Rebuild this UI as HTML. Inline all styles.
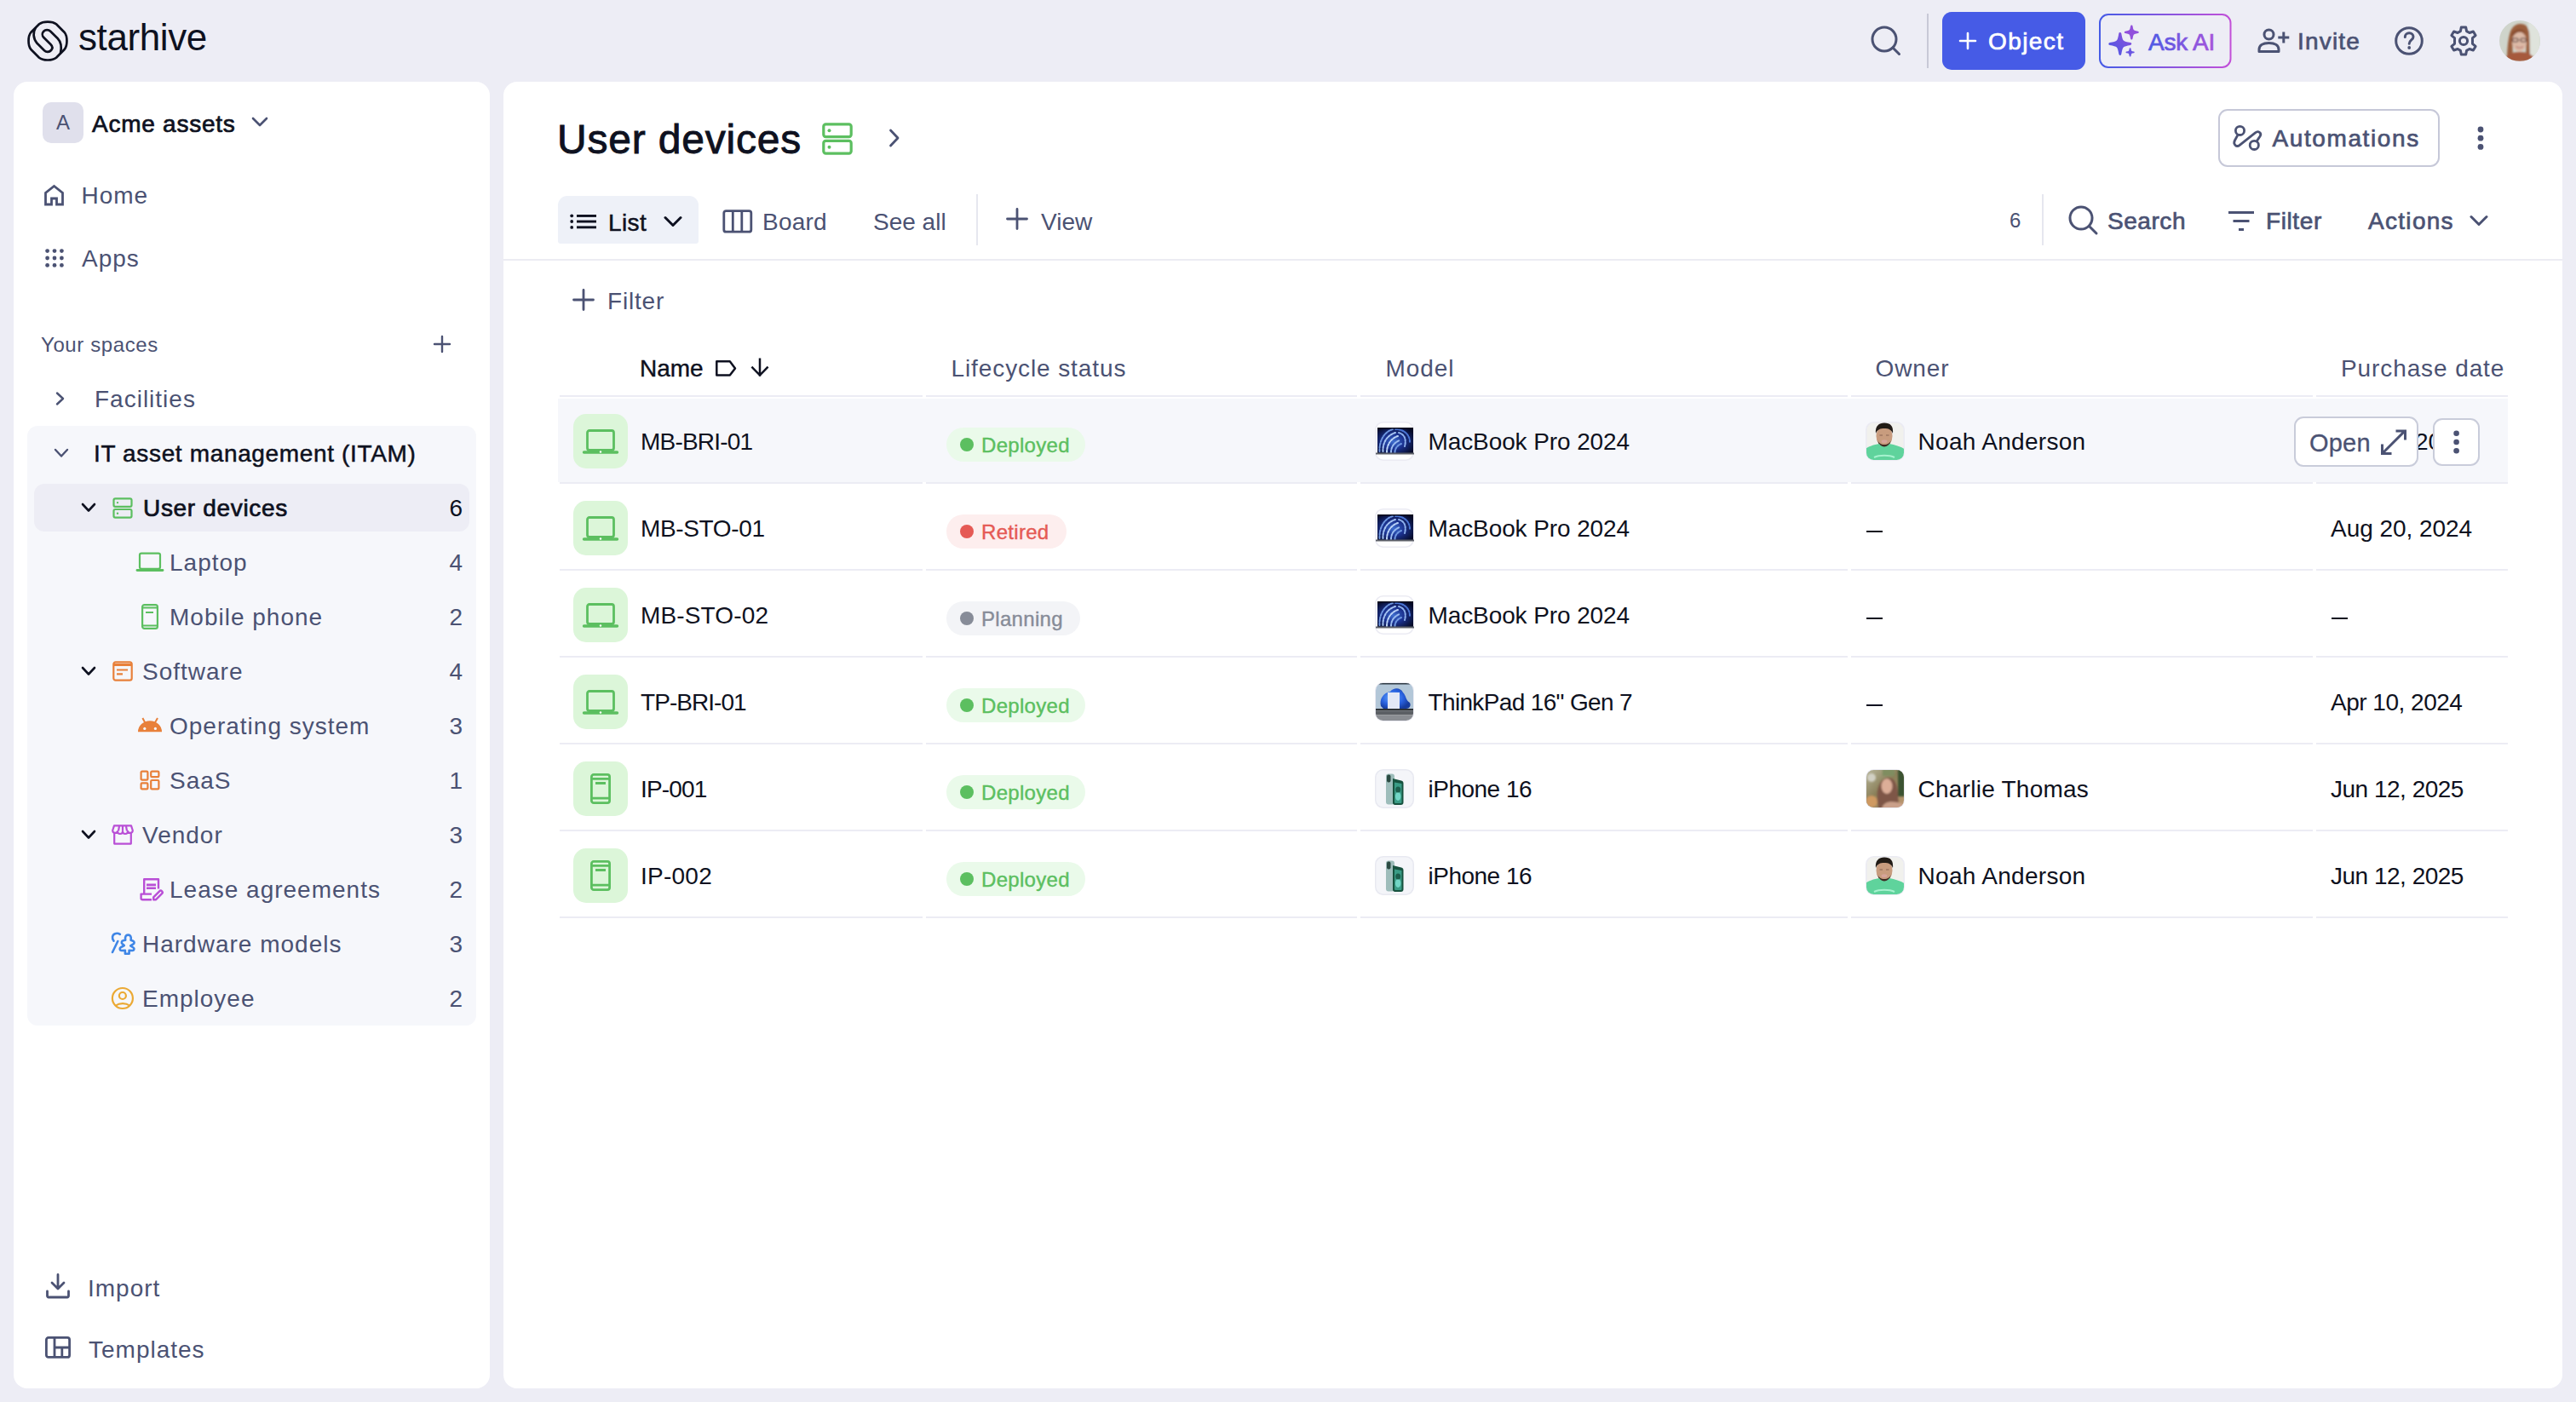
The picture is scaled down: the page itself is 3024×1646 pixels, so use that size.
<!DOCTYPE html>
<html><head><meta charset="utf-8">
<style>
*{box-sizing:border-box;margin:0;padding:0}
html,body{width:3024px;height:1646px;overflow:hidden}
body{background:#ededf5;-webkit-font-smoothing:antialiased;font-family:"Liberation Sans",sans-serif;position:relative;color:#0e1120}
.a{position:absolute}
.t{position:absolute;white-space:nowrap;line-height:1}
.s28{font-size:28px}
.s24{font-size:24px}
.dk{color:#0e1120}
.sl{color:#4b5273}
.b{font-weight:bold}
.card{position:absolute;background:#fff;border-radius:16px}
svg{position:absolute;overflow:visible}
@media (max-width:2000px){html{zoom:0.5}}
.thumb{position:absolute;width:46px;height:46px;border-radius:9px;overflow:hidden;box-shadow:0 0 0 1.5px #ebebf3}
.av{position:absolute;width:46px;height:46px;border-radius:9px;overflow:hidden;box-shadow:0 0 0 1.5px #ebebf3}
</style></head><body>

<!-- TOP BAR -->
<svg style="left:28px;top:20px" width="56" height="56" viewBox="0 0 56 56" fill="none" stroke="#0e1120" stroke-width="2.7" stroke-linecap="round" stroke-linejoin="round">
<path d="M18 8.3 C22.5 4.6 33.5 4.6 38 8.3 L47.7 18 C51.4 22.5 51.4 33.5 47.7 38 L38 47.7 C33.5 51.4 22.5 51.4 18 47.7 L8.3 38 C4.6 33.5 4.6 22.5 8.3 18 Z"/>
<path d="M13.5 13.3 C10.8 17.5 10.5 25 15.5 30.8 L24 39.3 C26.3 41.5 30 41.3 32 39 C33.8 37 33.6 34.3 31.6 32.3 L23.3 24 C21.3 22 21.3 18.7 23.3 16.7 C25.3 14.7 29 14.6 31.2 16.7 L39.6 25 C44 29.5 44.6 35.5 43 42.5"/>
</svg>
<div class="t dk" style="left:92px;top:22px;font-size:44px;letter-spacing:-0.4px">starhive</div>

<svg style="left:2196px;top:30px" width="36" height="36" viewBox="0 0 36 36" fill="none" stroke="#4b5273" stroke-width="3"><circle cx="16" cy="16" r="14"/><path d="M26 26 L33.5 33.5" stroke-linecap="round"/></svg>
<div class="a" style="left:2262px;top:16px;width:2px;height:64px;background:#c8c9d6"></div>
<div class="a" style="left:2280px;top:14px;width:168px;height:68px;border-radius:11px;background:#465be6"></div>
<svg style="left:2300px;top:38px" width="20" height="20" viewBox="0 0 20 20"><path d="M10 1 V19 M1 10 H19" stroke="#fff" stroke-width="2.6" stroke-linecap="round"/></svg>
<div class="t s28" style="left:2334px;top:35px;color:#fff;-webkit-text-stroke:0.7px #fff;letter-spacing:1.4px">Object</div>
<svg style="left:2464px;top:16px" width="156" height="64" viewBox="0 0 156 64"><defs><linearGradient id="gAI" x1="0" y1="0" x2="1" y2="0"><stop offset="0" stop-color="#465be6"/><stop offset="1" stop-color="#c24fd8"/></linearGradient><linearGradient id="gAI2" x1="0" y1="1" x2="1" y2="0" gradientUnits="objectBoundingBox"><stop offset="0" stop-color="#4a58e4"/><stop offset="1" stop-color="#8e50dc"/></linearGradient></defs><rect x="1" y="1" width="153.5" height="62" rx="10" fill="none" stroke="url(#gAI)" stroke-width="2"/>
<path d="M24.8 23.4 C26.24 33.0 27.2 33.96 36.8 35.4 C27.2 36.84 26.24 37.8 24.8 47.4 C23.36 37.8 22.4 36.84 12.8 35.4 C22.4 33.96 23.36 33.0 24.8 23.4 Z" fill="url(#gAI2)" stroke="url(#gAI2)" stroke-width="3.0" stroke-linejoin="round"/><path d="M38.3 14.6 C39.18 20.44 39.76 21.02 45.6 21.9 C39.76 22.78 39.18 23.36 38.3 29.2 C37.42 23.36 36.84 22.78 31.0 21.9 C36.84 21.02 37.42 20.44 38.3 14.6 Z" fill="#9150dc" stroke="#9150dc" stroke-width="2.4" stroke-linejoin="round"/><path d="M36.6 41.1 C37.1 44.46 37.44 44.8 40.8 45.3 C37.44 45.8 37.1 46.14 36.6 49.5 C36.1 46.14 35.76 45.8 32.4 45.3 C35.76 44.8 36.1 44.46 36.6 41.1 Z" fill="#6a56e2" stroke="#6a56e2" stroke-width="1.8" stroke-linejoin="round"/></svg>
<svg style="left:2516px;top:30px" width="100" height="40" viewBox="0 0 100 40"><defs><linearGradient id="gtx" x1="0" y1="0" x2="1" y2="0"><stop offset="0" stop-color="#4d5ae4"/><stop offset="1" stop-color="#a653db"/></linearGradient></defs><text x="6" y="28.6" font-family="Liberation Sans" font-size="28" fill="url(#gtx)" stroke="url(#gtx)" stroke-width="0.7" letter-spacing="-0.2">Ask AI</text></svg>

<svg style="left:2649px;top:33px" width="40" height="30" viewBox="0 0 40 30" fill="none" stroke="#4b5273" stroke-width="3"><circle cx="14.5" cy="7.5" r="5.5"/><path d="M3 27.5 V25 C3 20.5 7 17.5 14.5 17.5 C22 17.5 26 20.5 26 25 V27.5 Z" stroke-linejoin="round"/><path d="M31.8 4.5 V17.5 M25.3 11 H38.3"/></svg>
<div class="t s28 sl" style="left:2697px;top:35px;-webkit-text-stroke:0.7px #4b5273;letter-spacing:1.2px">Invite</div>
<svg style="left:2810px;top:30px" width="36" height="36" viewBox="0 0 36 36" fill="none" stroke="#4b5273" stroke-width="3"><circle cx="18" cy="18" r="15.3"/><path d="M13.3 13.5 C13.3 10.5 15.5 8.8 18.2 8.8 C21 8.8 23 10.6 23 13.2 C23 16.8 18.2 17 18.2 21.3" stroke-linecap="round"/><circle cx="18.2" cy="26" r="1.9" fill="#4b5273" stroke="none"/></svg>
<svg style="left:2874px;top:30px" width="36" height="36" viewBox="0 0 36 36" fill="none" stroke="#4b5273" stroke-width="3" stroke-linejoin="round"><path d="M15.3 2 H20.7 L21.6 6.6 L24.9 8.5 L29.4 7 L32.1 11.6 L28.5 14.7 V21.3 L32.1 24.4 L29.4 29 L24.9 27.5 L21.6 29.4 L20.7 34 H15.3 L14.4 29.4 L11.1 27.5 L6.6 29 L3.9 24.4 L7.5 21.3 V14.7 L3.9 11.6 L6.6 7 L11.1 8.5 L14.4 6.6 Z"/><circle cx="18" cy="18" r="4.6"/></svg>
<svg style="left:2934px;top:24px" width="48" height="48" viewBox="0 0 48 48"><defs><clipPath id="cav"><circle cx="24" cy="24" r="24"/></clipPath><filter id="bav" x="-10%" y="-10%" width="120%" height="120%"><feGaussianBlur stdDeviation="1"/></filter></defs>
<g clip-path="url(#cav)"><rect width="48" height="48" fill="#cfd4cb"/><g filter="url(#bav)"><rect x="34" y="0" width="14" height="48" fill="#dfe3dc"/>
<path d="M9 48 C9 36 10 22 13 13 C16 6 20 4 25 4 C31 4 34 8 35 14 C36 24 35 38 37 48 L31 48 C31 40 32 30 31 20 C28 14 20 13 16 20 C15 30 16 40 16 48 Z" fill="#9b5f3e"/>
<ellipse cx="23.5" cy="25" rx="8.5" ry="11.5" fill="#ddb9a6"/><path d="M14 16 C18 9 28 8 33 16 C29 12 21 12 15 19 Z" fill="#8a4f30"/>
<rect x="15.5" y="21" width="6.5" height="4" rx="1.5" fill="none" stroke="#4a3434" stroke-width="1.2"/><rect x="25" y="21" width="6.5" height="4" rx="1.5" fill="none" stroke="#4a3434" stroke-width="1.2"/>
<path d="M19.5 30.5 C22 32.5 25.5 32.5 28 30.5" stroke="#b87a74" stroke-width="1.3" fill="none"/>
<path d="M4 48 C8 40 16 37 24 37 C32 37 40 40 44 48 Z" fill="#a65a3c"/></g></g></svg>
<!-- SIDEBAR -->
<div class="card" style="left:16px;top:96px;width:559px;height:1534px"></div>
<div class="a" style="left:50px;top:120px;width:48px;height:48px;border-radius:10px;background:#e0e0ec"></div>
<div class="t s24 sl" style="left:50px;width:48px;text-align:center;top:132px">A</div>
<div class="t s28 dk" style="left:108px;top:132px;-webkit-text-stroke:0.7px #0e1120;letter-spacing:0.75px">Acme assets</div>
<svg style="left:295px;top:137px" width="20" height="12" viewBox="0 0 20 12"><path d="M2 2 L10 10 L18 2" fill="none" stroke="#4b5273" stroke-width="2.6" stroke-linecap="round" stroke-linejoin="round"/></svg>

<!-- home -->
<svg style="left:52px;top:217px" width="24" height="24" viewBox="0 0 24 24"><path d="M1.5 23 V9.5 L11.5 1.5 L21.5 9.5 V23 H14.5 V16 H8.5 V23 Z" fill="none" stroke="#4b5273" stroke-width="2.8" stroke-linejoin="miter"/></svg>
<div class="t s28 sl" style="left:95.5px;top:216px;letter-spacing:1px">Home</div>
<!-- apps -->
<svg style="left:53px;top:292px" width="22" height="22" viewBox="0 0 22 22" fill="#4b5273"><circle cx="2.6" cy="2.6" r="2.4"/><circle cx="11" cy="2.6" r="2.4"/><circle cx="19.4" cy="2.6" r="2.4"/><circle cx="2.6" cy="11" r="2.4"/><circle cx="11" cy="11" r="2.4"/><circle cx="19.4" cy="11" r="2.4"/><circle cx="2.6" cy="19.4" r="2.4"/><circle cx="11" cy="19.4" r="2.4"/><circle cx="19.4" cy="19.4" r="2.4"/></svg>
<div class="t s28 sl" style="left:96px;top:290px;letter-spacing:1px">Apps</div>

<div class="t s24 sl" style="left:48px;top:393px;letter-spacing:0.6px">Your spaces</div>
<svg style="left:509px;top:394px" width="20" height="20" viewBox="0 0 20 20"><path d="M10 1 V19 M1 10 H19" stroke="#4b5273" stroke-width="2.4" stroke-linecap="round"/></svg>

<!-- Facilities -->
<svg style="left:65px;top:460px" width="12" height="16" viewBox="0 0 12 16"><path d="M2 1.5 L9 8 L2 14.5" fill="none" stroke="#4b5273" stroke-width="2.4" stroke-linecap="round" stroke-linejoin="round"/></svg>
<div class="t s28 sl" style="left:111px;top:455px;letter-spacing:1px">Facilities</div>

<!-- ITAM group -->
<div class="a" style="left:32px;top:500px;width:527px;height:704px;border-radius:12px;background:#f6f7fb"></div>
<svg style="left:63px;top:526px" width="18" height="12" viewBox="0 0 18 12"><path d="M2 2 L9 9.5 L16 2" fill="none" stroke="#4b5273" stroke-width="2.4" stroke-linecap="round" stroke-linejoin="round"/></svg>
<div class="t s28 dk" style="left:110px;top:519px;-webkit-text-stroke:0.5px #0e1120;letter-spacing:0.65px">IT asset management (ITAM)</div>

<div class="a" style="left:40px;top:568px;width:511px;height:56px;border-radius:12px;background:#ededf5"></div>
<svg style="left:95px;top:590px" width="18" height="12" viewBox="0 0 18 12"><path d="M2 2 L9 9.5 L16 2" fill="none" stroke="#0e1120" stroke-width="2.6" stroke-linecap="round" stroke-linejoin="round"/></svg>
<svg style="left:132px;top:584px" width="24" height="26" viewBox="0 0 24 26" fill="none" stroke="#5cbf60" stroke-width="2.2"><rect x="1.5" y="1.3" width="21" height="9.6" rx="1.8"/><rect x="1.5" y="14" width="21" height="9.6" rx="1.8"/><circle cx="6" cy="6.1" r="1.2" fill="#5cbf60" stroke="none"/><circle cx="6" cy="18.8" r="1.2" fill="#5cbf60" stroke="none"/></svg>
<div class="t s28 dk" style="left:168px;top:583px;-webkit-text-stroke:0.7px #0e1120;letter-spacing:0.67px">User devices</div>
<div class="t s28 dk" style="left:500px;width:43px;text-align:right;top:583px">6</div>

<!-- Laptop -->
<svg style="left:160px;top:648px" width="32" height="24" viewBox="0 0 32 24" fill="none" stroke="#5cbf60" stroke-width="2.2"><rect x="4" y="1.6" width="24" height="18.2" rx="2"/><path d="M1 21.5 H31" stroke-width="2.8" stroke-linecap="round"/></svg>
<div class="t s28 sl" style="left:199px;top:647px;letter-spacing:1px">Laptop</div>
<div class="t s28 sl" style="left:500px;width:43px;text-align:right;top:647px">4</div>
<!-- Mobile -->
<svg style="left:166px;top:709px" width="20" height="30" viewBox="0 0 20 30" fill="none" stroke="#5cbf60" stroke-width="2.2"><rect x="1.1" y="1.1" width="17.8" height="27.8" rx="2.4"/><path d="M1.5 4.5 H18.5 M5 10 H14 M1.5 25.5 H18.5"/></svg>
<div class="t s28 sl" style="left:199px;top:711px;letter-spacing:1px">Mobile phone</div>
<div class="t s28 sl" style="left:500px;width:43px;text-align:right;top:711px">2</div>

<!-- Software -->
<svg style="left:95px;top:782px" width="18" height="12" viewBox="0 0 18 12"><path d="M2 2 L9 9.5 L16 2" fill="none" stroke="#0e1120" stroke-width="2.6" stroke-linecap="round" stroke-linejoin="round"/></svg>
<svg style="left:132px;top:776px" width="24" height="24" viewBox="0 0 24 24" fill="none" stroke="#e8803a" stroke-width="2.2"><rect x="1.3" y="1.3" width="21.4" height="21.4" rx="2.4"/><path d="M1.3 4.5 H22.7" stroke-width="3"/><path d="M5 10.5 H18 M5 15.3 H12"/></svg>
<div class="t s28 sl" style="left:167px;top:775px;letter-spacing:1px">Software</div>
<div class="t s28 sl" style="left:500px;width:43px;text-align:right;top:775px">4</div>
<!-- OS -->
<svg style="left:161px;top:841px" width="30" height="19" viewBox="0 0 30 19"><path d="M1 18.3 A14 13 0 0 1 29 18.3 Z" fill="#e8803a"/><path d="M6.4 2 L9.6 8 M24 2 L20.6 8" stroke="#e8803a" stroke-width="2"/><circle cx="8.8" cy="14.4" r="1.6" fill="#f6f7fb"/><circle cx="21.4" cy="14.4" r="1.6" fill="#f6f7fb"/></svg>
<div class="t s28 sl" style="left:199px;top:839px;letter-spacing:1px">Operating system</div>
<div class="t s28 sl" style="left:500px;width:43px;text-align:right;top:839px">3</div>
<!-- SaaS -->
<svg style="left:164px;top:904px" width="24" height="24" viewBox="0 0 24 24" fill="none" stroke="#e8803a" stroke-width="2.2"><rect x="1.6" y="1.6" width="7.8" height="10" rx="1.2"/><rect x="13.2" y="1.6" width="9.2" height="6.6" rx="1.2"/><rect x="1.6" y="15.4" width="7.8" height="7" rx="1.2"/><rect x="13.2" y="12" width="9.2" height="10.4" rx="1.2"/></svg>
<div class="t s28 sl" style="left:199px;top:903px;letter-spacing:1px">SaaS</div>
<div class="t s28 sl" style="left:500px;width:43px;text-align:right;top:903px">1</div>

<!-- Vendor -->
<svg style="left:95px;top:974px" width="18" height="12" viewBox="0 0 18 12"><path d="M2 2 L9 9.5 L16 2" fill="none" stroke="#0e1120" stroke-width="2.6" stroke-linecap="round" stroke-linejoin="round"/></svg>
<svg style="left:131px;top:968px" width="26" height="24" viewBox="0 0 26 24" fill="none" stroke="#b94fd6" stroke-width="2.2" stroke-linejoin="round"><path d="M3 1.3 H23 L24.8 7 A3 3 0 0 1 19 8 A3 3 0 0 1 13 8 A3 3 0 0 1 7 8 A3 3 0 0 1 1.2 7 Z"/><path d="M3.2 10 V22.6 H22.8 V10"/><path d="M9 2 L8 7.5 M13 2 V7.5 M17 2 L18 7.5"/></svg>
<div class="t s28 sl" style="left:167px;top:967px;letter-spacing:1px">Vendor</div>
<div class="t s28 sl" style="left:500px;width:43px;text-align:right;top:967px">3</div>
<!-- Lease -->
<svg style="left:164px;top:1030px" width="28" height="28" viewBox="0 0 28 28" fill="none" stroke="#b94fd6" stroke-width="2.4" stroke-linejoin="round"><path d="M5.2 19.5 V2.3 H22 V13.4"/><path d="M8 8.9 H19 M8 12.7 H19" stroke-width="2.6"/><path d="M14 19.6 H1.6 V24.5 C1.6 25.6 2.4 26.3 3.5 26.3 H14"/><path d="M16.2 26.2 V23.3 L23.2 16.3 C24 15.5 25.3 15.5 26.1 16.3 C26.9 17.1 26.9 18.4 26.1 19.2 L19.1 26.2 Z"/></svg>
<div class="t s28 sl" style="left:199px;top:1031px;letter-spacing:1px">Lease agreements</div>
<div class="t s28 sl" style="left:500px;width:43px;text-align:right;top:1031px">2</div>

<!-- HW models -->
<svg style="left:130px;top:1094px" width="30" height="28" viewBox="0 0 30 28" fill="none" stroke="#3f86e6" stroke-width="2.6" stroke-linecap="round" stroke-linejoin="round"><path d="M3.5 10.7 C1.2 8 1.5 3.5 5 2.2 C7 1.5 9.3 1.9 10.9 2.9"/><path d="M8.3 11 L2 24"/><path d="M20.4 3.6 C23 3.6 24.4 5.5 23.6 9.8 L26.2 10.8 C28 11.5 28 13.5 26.5 14.4 L23.2 16.4 L26.5 18.5 C28.2 19.6 27.5 22 25.4 22 L21.6 21.8 V25.8 H16.9 V21.8 L12.8 22 C10.5 22 10 19.4 11.6 18.4 L15.8 16 L13.5 14 C12.2 12.8 12.8 10.6 14.6 10.2 L17.2 9.8 C16.5 5.5 17.8 3.6 20.4 3.6 Z"/></svg>
<div class="t s28 sl" style="left:167px;top:1095px;letter-spacing:1px">Hardware models</div>
<div class="t s28 sl" style="left:500px;width:43px;text-align:right;top:1095px">3</div>
<!-- Employee -->
<svg style="left:130px;top:1158px" width="28" height="28" viewBox="0 0 28 28" fill="none" stroke="#eba934" stroke-width="2.2"><circle cx="13.9" cy="14" r="12"/><circle cx="13.9" cy="11" r="4"/><path d="M6 22.5 A10 6 0 0 1 22 22.5"/></svg>
<div class="t s28 sl" style="left:167px;top:1159px;letter-spacing:1px">Employee</div>
<div class="t s28 sl" style="left:500px;width:43px;text-align:right;top:1159px">2</div>

<!-- Import / Templates -->
<svg style="left:54px;top:1495px" width="28" height="30" viewBox="0 0 28 30" fill="none" stroke="#4b5273" stroke-width="2.8" stroke-linecap="round" stroke-linejoin="round"><path d="M14 1.5 V18 M7 11 L14 18 L21 11"/><path d="M1.5 21 V26.5 A1.5 1.5 0 0 0 3 28 H25 A1.5 1.5 0 0 0 26.5 26.5 V21"/></svg>
<div class="t s28 sl" style="left:103px;top:1499px;letter-spacing:1px">Import</div>
<svg style="left:53px;top:1569px" width="30" height="26" viewBox="0 0 30 26" fill="none" stroke="#4b5273" stroke-width="2.8" stroke-linejoin="round"><rect x="1.4" y="1.4" width="27.2" height="23" rx="2.5"/><path d="M11 1.4 V24.4 M11 13 H28.6 M19.8 13 V24.4"/></svg>
<div class="t s28 sl" style="left:104px;top:1571px;letter-spacing:1px">Templates</div>

<!-- MAIN -->
<div class="card" style="left:591px;top:96px;width:2417px;height:1534px"></div>
<div class="t dk" style="left:654px;top:140px;font-size:48px;-webkit-text-stroke:0.9px #0e1120;letter-spacing:0.8px">User devices</div>
<svg style="left:965px;top:144px" width="36" height="38" viewBox="0 0 36 38" fill="none" stroke="#5cbf60" stroke-width="3.2"><rect x="1.8" y="1.8" width="32.4" height="14.8" rx="2.6"/><rect x="1.8" y="21.4" width="32.4" height="14.8" rx="2.6"/><circle cx="8.5" cy="9.2" r="2" fill="#5cbf60" stroke="none"/><circle cx="8.5" cy="28.8" r="2" fill="#5cbf60" stroke="none"/></svg>
<svg style="left:1043px;top:151px" width="14" height="22" viewBox="0 0 14 22"><path d="M2.5 2 L11 11 L2.5 20" fill="none" stroke="#4b5273" stroke-width="2.8" stroke-linecap="round" stroke-linejoin="round"/></svg>

<div class="a" style="left:2604px;top:128px;width:260px;height:68px;border:2px solid #c6c8d8;border-radius:11px"></div>
<svg style="left:2620px;top:146px" width="36" height="32" viewBox="0 0 36 32" fill="none" stroke="#4b5273" stroke-width="2.8" stroke-linecap="round" stroke-linejoin="round"><circle cx="9.5" cy="7.4" r="5.1"/><circle cx="26.3" cy="24.4" r="5.1"/><path d="M7 12.4 L3.4 19 C1.2 23.3 5.3 27.5 9.2 24.3 L27.5 9.8 C31 7 35.3 10 33.2 13.8 L29.3 19.6"/></svg>
<div class="t s28 sl" style="left:2667.5px;top:149px;-webkit-text-stroke:0.7px #4b5273;letter-spacing:1.6px">Automations</div>
<svg style="left:2907px;top:148px" width="10" height="30" viewBox="0 0 10 30" fill="#4b5273"><circle cx="5" cy="4" r="3.4"/><circle cx="5" cy="14.2" r="3.4"/><circle cx="5" cy="24.4" r="3.4"/></svg>

<!-- toolbar -->
<div class="a" style="left:655px;top:230px;width:165px;height:56px;border-radius:11px 11px 3px 3px;background:#eef1f8"></div>
<svg style="left:669px;top:251px" width="32" height="18" viewBox="0 0 32 18" fill="#0e1120"><circle cx="2.2" cy="2.3" r="1.9"/><circle cx="2.2" cy="9" r="1.9"/><circle cx="2.2" cy="15.9" r="1.9"/><rect x="8" y="1" width="23" height="2.9"/><rect x="8" y="7.6" width="23" height="2.9"/><rect x="8" y="14.4" width="23" height="2.9"/></svg>
<div class="t s28 dk" style="left:714px;top:248px;-webkit-text-stroke:0.5px #0e1120;letter-spacing:0.4px">List</div>
<svg style="left:779px;top:253px" width="22" height="15" viewBox="0 0 22 15"><path d="M2 2.5 L11 11.5 L20 2.5" fill="none" stroke="#0e1120" stroke-width="3" stroke-linecap="round" stroke-linejoin="round"/></svg>
<svg style="left:848px;top:246px" width="36" height="30" viewBox="0 0 36 30" fill="none" stroke="#4b5273" stroke-width="2.8"><rect x="1.8" y="1.6" width="32" height="24.6" rx="2.5"/><path d="M12.3 1.6 V26.2 M22.8 1.6 V26.2"/></svg>
<div class="t s28 sl" style="left:895px;top:247px;letter-spacing:0.2px">Board</div>
<div class="t s28 sl" style="left:1025px;top:247px">See all</div>
<div class="a" style="left:1146px;top:228px;width:2px;height:60px;background:#e6e7ef"></div>
<svg style="left:1181px;top:244px" width="26" height="26" viewBox="0 0 26 26"><path d="M13 1.5 V24.5 M1.5 13 H24.5" stroke="#4b5273" stroke-width="2.8" stroke-linecap="round"/></svg>
<div class="t s28 sl" style="left:1222px;top:247px">View</div>

<div class="t s24 sl" style="left:2359px;top:247px">6</div>
<div class="a" style="left:2397px;top:228px;width:2px;height:60px;background:#e6e7ef"></div>
<svg style="left:2428px;top:241px" width="36" height="36" viewBox="0 0 36 36" fill="none" stroke="#4b5273" stroke-width="3"><circle cx="15" cy="15" r="13"/><path d="M24.5 24.5 L33 33" stroke-linecap="round"/></svg>
<div class="t s28 sl" style="left:2474px;top:246px;-webkit-text-stroke:0.7px #4b5273;letter-spacing:0.55px">Search</div>
<svg style="left:2615px;top:247px" width="32" height="26" viewBox="0 0 32 26" stroke="#4b5273" stroke-width="3"><path d="M1 2.5 H31 M6.5 12.5 H25.5 M13 22.5 H19"/></svg>
<div class="t s28 sl" style="left:2660px;top:246px;-webkit-text-stroke:0.7px #4b5273;letter-spacing:0.6px">Filter</div>
<div class="t s28 sl" style="left:2780px;top:246px;-webkit-text-stroke:0.7px #4b5273;letter-spacing:1.3px">Actions</div>
<svg style="left:2899px;top:252px" width="22" height="15" viewBox="0 0 22 15"><path d="M2 2.5 L11 11.5 L20 2.5" fill="none" stroke="#4b5273" stroke-width="3" stroke-linecap="round" stroke-linejoin="round"/></svg>

<div class="a" style="left:591px;top:304px;width:2417px;height:2px;background:#ececf3"></div>

<svg style="left:672px;top:339px" width="26" height="26" viewBox="0 0 26 26"><path d="M13 1.5 V24.5 M1.5 13 H24.5" stroke="#4b5273" stroke-width="2.8" stroke-linecap="round"/></svg>
<div class="t s28 sl" style="left:713px;top:340px;letter-spacing:0.8px">Filter</div>

<!-- headers -->
<div class="t s28 dk" style="left:751px;top:419px;-webkit-text-stroke:0.4px #0e1120">Name</div>
<svg style="left:840px;top:423px" width="25" height="19" viewBox="0 0 25 19" fill="none" stroke="#0e1120" stroke-width="2.5" stroke-linejoin="round"><path d="M1.3 1.3 H16.8 L23 9.4 L16.8 17.5 H1.3 Z"/></svg>
<svg style="left:881px;top:420px" width="22" height="24" viewBox="0 0 22 24" fill="none" stroke="#0e1120" stroke-width="2.5" stroke-linecap="square" stroke-linejoin="miter"><path d="M11 1.8 V20.5 M2.3 11.5 L11 20.5 L19.7 11.5"/></svg>
<div class="t s28 sl" style="left:1116.5px;top:419px;letter-spacing:0.9px">Lifecycle status</div>
<div class="t s28 sl" style="left:1626.5px;top:419px;letter-spacing:0.9px">Model</div>
<div class="t s28 sl" style="left:2201.5px;top:419px;letter-spacing:0.9px">Owner</div>
<div class="t s28 sl" style="left:2748px;top:419px;letter-spacing:0.9px">Purchase date</div>

<div class="a" style="left:657px;top:464px;width:426px;height:2px;background:#ececf4"></div><div class="a" style="left:1087px;top:464px;width:506px;height:2px;background:#ececf4"></div><div class="a" style="left:1597px;top:464px;width:572px;height:2px;background:#ececf4"></div><div class="a" style="left:2173px;top:464px;width:542px;height:2px;background:#ececf4"></div><div class="a" style="left:2719px;top:464px;width:225px;height:2px;background:#ececf4"></div>
<div class="a" style="left:655px;top:468px;width:2289px;height:98px;background:#f6f7fb"></div>
<div class="a" style="left:673px;top:486px;width:64px;height:64px;border-radius:15px;background:#dcf6d9"></div>
<svg style="left:684px;top:504px" width="42" height="30" viewBox="0 0 42 30" fill="none" stroke="#5cbf60" stroke-width="2.8"><rect x="5.5" y="1.5" width="31" height="23" rx="2.5"/><path d="M1.5 27 H40.5" stroke-width="3.4" stroke-linecap="round"/><circle cx="21" cy="26.5" r="1.2" fill="#fff" stroke="none"/></svg>
<div class="t s28 dk" style="left:752px;top:505px;letter-spacing:-0.8px">MB-BRI-01</div>
<div class="a" style="left:1111px;top:502px;width:163px;height:40px;border-radius:20px;background:#eafaea"></div>
<div class="a" style="left:1127px;top:514px;width:16px;height:16px;border-radius:8px;background:#5cbf60"></div>
<div class="t s24" style="left:1152px;top:511px;color:#5cbf60;-webkit-text-stroke:0.4px #5cbf60;letter-spacing:0.3px">Deployed</div>
<svg style="left:1614px;top:495px" width="46" height="46" viewBox="0 0 46 46"><defs><radialGradient id="mg495" cx="0.45" cy="0.55" r="0.65"><stop offset="0" stop-color="#3f6fd0"/><stop offset="0.45" stop-color="#1b3290"/><stop offset="1" stop-color="#050a26"/></radialGradient><filter id="mb495" x="-5%" y="-5%" width="110%" height="110%"><feGaussianBlur stdDeviation="0.45"/></filter></defs><rect x="0.75" y="0.75" width="44.5" height="44.5" rx="9" fill="#fff" stroke="#ebebf3" stroke-width="1.5"/>
<rect x="3" y="7" width="42" height="30" fill="url(#mg495)"/>
<g fill="none" stroke-linecap="round" stroke-dasharray="2.2 1.6" stroke-width="2" filter="url(#mb495)">
<path d="M5.5 35 C5 22 11 12 21 9" stroke="#6f98e2"/>
<path d="M9.5 35 C9 25 14 16 24 13" stroke="#a8c6f4"/>
<path d="M14 36 C14 28 18 20 27 17" stroke="#bcd4f8"/>
<path d="M19 36 C19 30 22 25 29 22" stroke="#9bbcf0"/>
<path d="M23.5 36 C23.5 32 26 28 31 26" stroke="#6f98e2"/>
<path d="M24 9 C34 9 41 15 41 24" stroke="#4a74d4"/>
<path d="M28 13 C35 15 37 21 35 29" stroke="#8fb2ee"/>
</g>
<rect x="3" y="7" width="42" height="1.5" fill="#0a0d1c"/>
<rect x="1" y="36.5" width="45" height="2" fill="#5d6068"/></svg>
<div class="t s28 dk" style="left:1676.5px;top:505px;letter-spacing:-0.1px">MacBook Pro 2024</div>
<svg style="left:2190px;top:495px" width="46" height="46" viewBox="0 0 46 46"><defs><clipPath id="cn495"><rect x="1" y="1" width="44" height="44" rx="8.5"/></clipPath><filter id="bl495" x="-10%" y="-10%" width="120%" height="120%"><feGaussianBlur stdDeviation="0.6"/></filter></defs>
<rect x="0.75" y="0.75" width="44.5" height="44.5" rx="9" fill="#f1f1ed" stroke="#ebebf3" stroke-width="1.5"/>
<g clip-path="url(#cn495)" filter="url(#bl495)"><ellipse cx="22" cy="17" rx="9.5" ry="12.5" fill="#c89c7e"/><path d="M12 14 C11 5 16 1.5 22 1.5 C29 1.5 33 5 32 14 C30 9 27 8 22 8 C17 8 14 9 12 14 Z" fill="#231b19"/>
<path d="M14 21 C15.5 29 28.5 29 30 21 C29 27 26 30 22 30 C18 30 15 27 14 21 Z" fill="#3e2a24"/><ellipse cx="22" cy="23.2" rx="3.4" ry="1.9" fill="#d6a49a"/><path d="M16.5 16 H20 M24 16 H27.5" stroke="#8a6450" stroke-width="1.1"/>
<path d="M-1 46 V33 C3 29 10 27 16 26 C19 30.5 25 30.5 28 26 C34 27 41 29 47 33 V46 Z" fill="#5fd39c"/><path d="M10 42 C16 39 28 39 34 42" stroke="#a6f2cf" stroke-width="2" fill="none"/></g></svg>
<div class="t s28 dk" style="left:2251.5px;top:505px;letter-spacing:0.3px">Noah Anderson</div>
<div class="t s28 dk" style="left:2731px;top:505px;letter-spacing:-0.05px">Aug 20, 2024</div>
<div class="a" style="left:2693px;top:489px;width:146px;height:59px;border:2px solid #c9ccda;border-radius:11px;background:#fff"></div>
<div class="t" style="left:2711px;top:506px;font-size:29px;color:#4b5273;-webkit-text-stroke:0.3px #4b5273;letter-spacing:0.2px">Open</div>
<svg style="left:2794px;top:503px" width="32" height="32" viewBox="0 0 32 32" fill="none" stroke="#4b5273" stroke-width="3"><path d="M3 29 L29 3 M18.5 3 H29.5 V13.5 M2.5 18.5 V29.5 H13.5"/></svg>
<div class="a" style="left:2856px;top:491px;width:55px;height:56px;border:2px solid #c9ccda;border-radius:11px;background:#fff"></div>
<svg style="left:2878px;top:505px" width="10" height="30" viewBox="0 0 10 30" fill="#4b5273"><circle cx="5.6" cy="3.8" r="3.3"/><circle cx="5.6" cy="14" r="3.3"/><circle cx="5.6" cy="24.2" r="3.3"/></svg>
<div class="a" style="left:657px;top:566px;width:426px;height:2px;background:#ececf4"></div><div class="a" style="left:1087px;top:566px;width:506px;height:2px;background:#ececf4"></div><div class="a" style="left:1597px;top:566px;width:572px;height:2px;background:#ececf4"></div><div class="a" style="left:2173px;top:566px;width:542px;height:2px;background:#ececf4"></div><div class="a" style="left:2719px;top:566px;width:225px;height:2px;background:#ececf4"></div>
<div class="a" style="left:673px;top:588px;width:64px;height:64px;border-radius:15px;background:#dcf6d9"></div>
<svg style="left:684px;top:606px" width="42" height="30" viewBox="0 0 42 30" fill="none" stroke="#5cbf60" stroke-width="2.8"><rect x="5.5" y="1.5" width="31" height="23" rx="2.5"/><path d="M1.5 27 H40.5" stroke-width="3.4" stroke-linecap="round"/><circle cx="21" cy="26.5" r="1.2" fill="#fff" stroke="none"/></svg>
<div class="t s28 dk" style="left:752px;top:607px;letter-spacing:-0.35px">MB-STO-01</div>
<div class="a" style="left:1111px;top:604px;width:141px;height:40px;border-radius:20px;background:#fdeeee"></div>
<div class="a" style="left:1127px;top:616px;width:16px;height:16px;border-radius:8px;background:#e55a55"></div>
<div class="t s24" style="left:1152px;top:613px;color:#e55a55;-webkit-text-stroke:0.4px #e55a55;letter-spacing:0.3px">Retired</div>
<svg style="left:1614px;top:597px" width="46" height="46" viewBox="0 0 46 46"><defs><radialGradient id="mg597" cx="0.45" cy="0.55" r="0.65"><stop offset="0" stop-color="#3f6fd0"/><stop offset="0.45" stop-color="#1b3290"/><stop offset="1" stop-color="#050a26"/></radialGradient><filter id="mb597" x="-5%" y="-5%" width="110%" height="110%"><feGaussianBlur stdDeviation="0.45"/></filter></defs><rect x="0.75" y="0.75" width="44.5" height="44.5" rx="9" fill="#fff" stroke="#ebebf3" stroke-width="1.5"/>
<rect x="3" y="7" width="42" height="30" fill="url(#mg597)"/>
<g fill="none" stroke-linecap="round" stroke-dasharray="2.2 1.6" stroke-width="2" filter="url(#mb597)">
<path d="M5.5 35 C5 22 11 12 21 9" stroke="#6f98e2"/>
<path d="M9.5 35 C9 25 14 16 24 13" stroke="#a8c6f4"/>
<path d="M14 36 C14 28 18 20 27 17" stroke="#bcd4f8"/>
<path d="M19 36 C19 30 22 25 29 22" stroke="#9bbcf0"/>
<path d="M23.5 36 C23.5 32 26 28 31 26" stroke="#6f98e2"/>
<path d="M24 9 C34 9 41 15 41 24" stroke="#4a74d4"/>
<path d="M28 13 C35 15 37 21 35 29" stroke="#8fb2ee"/>
</g>
<rect x="3" y="7" width="42" height="1.5" fill="#0a0d1c"/>
<rect x="1" y="36.5" width="45" height="2" fill="#5d6068"/></svg>
<div class="t s28 dk" style="left:1676.5px;top:607px;letter-spacing:-0.1px">MacBook Pro 2024</div>
<div class="a" style="left:2191px;top:623px;width:19px;height:2px;background:#0e1120"></div>
<div class="t s28 dk" style="left:2736px;top:607px;letter-spacing:-0.05px">Aug 20, 2024</div>
<div class="a" style="left:657px;top:668px;width:426px;height:2px;background:#ececf4"></div><div class="a" style="left:1087px;top:668px;width:506px;height:2px;background:#ececf4"></div><div class="a" style="left:1597px;top:668px;width:572px;height:2px;background:#ececf4"></div><div class="a" style="left:2173px;top:668px;width:542px;height:2px;background:#ececf4"></div><div class="a" style="left:2719px;top:668px;width:225px;height:2px;background:#ececf4"></div>
<div class="a" style="left:673px;top:690px;width:64px;height:64px;border-radius:15px;background:#dcf6d9"></div>
<svg style="left:684px;top:708px" width="42" height="30" viewBox="0 0 42 30" fill="none" stroke="#5cbf60" stroke-width="2.8"><rect x="5.5" y="1.5" width="31" height="23" rx="2.5"/><path d="M1.5 27 H40.5" stroke-width="3.4" stroke-linecap="round"/><circle cx="21" cy="26.5" r="1.2" fill="#fff" stroke="none"/></svg>
<div class="t s28 dk" style="left:752px;top:709px;letter-spacing:0.15px">MB-STO-02</div>
<div class="a" style="left:1111px;top:706px;width:157px;height:40px;border-radius:20px;background:#f3f4f7"></div>
<div class="a" style="left:1127px;top:718px;width:16px;height:16px;border-radius:8px;background:#878c98"></div>
<div class="t s24" style="left:1152px;top:715px;color:#878c98;-webkit-text-stroke:0.4px #878c98;letter-spacing:0.3px">Planning</div>
<svg style="left:1614px;top:699px" width="46" height="46" viewBox="0 0 46 46"><defs><radialGradient id="mg699" cx="0.45" cy="0.55" r="0.65"><stop offset="0" stop-color="#3f6fd0"/><stop offset="0.45" stop-color="#1b3290"/><stop offset="1" stop-color="#050a26"/></radialGradient><filter id="mb699" x="-5%" y="-5%" width="110%" height="110%"><feGaussianBlur stdDeviation="0.45"/></filter></defs><rect x="0.75" y="0.75" width="44.5" height="44.5" rx="9" fill="#fff" stroke="#ebebf3" stroke-width="1.5"/>
<rect x="3" y="7" width="42" height="30" fill="url(#mg699)"/>
<g fill="none" stroke-linecap="round" stroke-dasharray="2.2 1.6" stroke-width="2" filter="url(#mb699)">
<path d="M5.5 35 C5 22 11 12 21 9" stroke="#6f98e2"/>
<path d="M9.5 35 C9 25 14 16 24 13" stroke="#a8c6f4"/>
<path d="M14 36 C14 28 18 20 27 17" stroke="#bcd4f8"/>
<path d="M19 36 C19 30 22 25 29 22" stroke="#9bbcf0"/>
<path d="M23.5 36 C23.5 32 26 28 31 26" stroke="#6f98e2"/>
<path d="M24 9 C34 9 41 15 41 24" stroke="#4a74d4"/>
<path d="M28 13 C35 15 37 21 35 29" stroke="#8fb2ee"/>
</g>
<rect x="3" y="7" width="42" height="1.5" fill="#0a0d1c"/>
<rect x="1" y="36.5" width="45" height="2" fill="#5d6068"/></svg>
<div class="t s28 dk" style="left:1676.5px;top:709px;letter-spacing:-0.1px">MacBook Pro 2024</div>
<div class="a" style="left:2191px;top:725px;width:19px;height:2px;background:#0e1120"></div>
<div class="a" style="left:2737px;top:725px;width:19px;height:2px;background:#0e1120"></div>
<div class="a" style="left:657px;top:770px;width:426px;height:2px;background:#ececf4"></div><div class="a" style="left:1087px;top:770px;width:506px;height:2px;background:#ececf4"></div><div class="a" style="left:1597px;top:770px;width:572px;height:2px;background:#ececf4"></div><div class="a" style="left:2173px;top:770px;width:542px;height:2px;background:#ececf4"></div><div class="a" style="left:2719px;top:770px;width:225px;height:2px;background:#ececf4"></div>
<div class="a" style="left:673px;top:792px;width:64px;height:64px;border-radius:15px;background:#dcf6d9"></div>
<svg style="left:684px;top:810px" width="42" height="30" viewBox="0 0 42 30" fill="none" stroke="#5cbf60" stroke-width="2.8"><rect x="5.5" y="1.5" width="31" height="23" rx="2.5"/><path d="M1.5 27 H40.5" stroke-width="3.4" stroke-linecap="round"/><circle cx="21" cy="26.5" r="1.2" fill="#fff" stroke="none"/></svg>
<div class="t s28 dk" style="left:752px;top:811px;letter-spacing:-0.95px">TP-BRI-01</div>
<div class="a" style="left:1111px;top:808px;width:163px;height:40px;border-radius:20px;background:#eafaea"></div>
<div class="a" style="left:1127px;top:820px;width:16px;height:16px;border-radius:8px;background:#5cbf60"></div>
<div class="t s24" style="left:1152px;top:817px;color:#5cbf60;-webkit-text-stroke:0.4px #5cbf60;letter-spacing:0.3px">Deployed</div>
<svg style="left:1614px;top:801px" width="46" height="46" viewBox="0 0 46 46"><defs><clipPath id="ctp801"><rect x="1" y="1" width="44" height="44" rx="8.5"/></clipPath><radialGradient id="gb801" cx="0.4" cy="0.45" r="0.6"><stop offset="0" stop-color="#6fb2ff"/><stop offset="0.6" stop-color="#2a62e0"/><stop offset="1" stop-color="#163c9e"/></radialGradient></defs>
<rect x="0.75" y="0.75" width="44.5" height="44.5" rx="9" fill="#fff" stroke="#ebebf3" stroke-width="1.5"/>
<g clip-path="url(#ctp801)"><rect x="0" y="0" width="46" height="32" fill="#b3c7d8"/><rect x="0" y="0" width="46" height="2.5" fill="#2f3a44"/>
<path d="M7 28 C5 20 10 12 18 11 C22 6 30 6 33 12 C37 16 36 21 41 24 C43 28 40 31 37 31 L10 31 Z" fill="url(#gb801)"/>
<rect x="15" y="12" width="14" height="19" fill="#e3e8f6"/>
<rect x="0" y="31" width="46" height="2.5" fill="#2e3236"/><rect x="0" y="33.5" width="46" height="5" fill="#5b5f64"/><rect x="0" y="38.5" width="46" height="8" fill="#8a8d92"/></g></svg>
<div class="t s28 dk" style="left:1676.5px;top:811px;letter-spacing:-0.65px">ThinkPad 16" Gen 7</div>
<div class="a" style="left:2191px;top:827px;width:19px;height:2px;background:#0e1120"></div>
<div class="t s28 dk" style="left:2736px;top:811px;letter-spacing:-0.5px">Apr 10, 2024</div>
<div class="a" style="left:657px;top:872px;width:426px;height:2px;background:#ececf4"></div><div class="a" style="left:1087px;top:872px;width:506px;height:2px;background:#ececf4"></div><div class="a" style="left:1597px;top:872px;width:572px;height:2px;background:#ececf4"></div><div class="a" style="left:2173px;top:872px;width:542px;height:2px;background:#ececf4"></div><div class="a" style="left:2719px;top:872px;width:225px;height:2px;background:#ececf4"></div>
<div class="a" style="left:673px;top:894px;width:64px;height:64px;border-radius:15px;background:#dcf6d9"></div>
<svg style="left:693px;top:908px" width="24" height="36" viewBox="0 0 24 36" fill="none" stroke="#5cbf60" stroke-width="2.8"><rect x="1.4" y="1.4" width="21.2" height="33.2" rx="2.6"/><path d="M1.5 6.3 H22.5 M6 11.5 H18 M1.5 29.2 H22.5"/></svg>
<div class="t s28 dk" style="left:752px;top:913px;letter-spacing:-0.85px">IP-001</div>
<div class="a" style="left:1111px;top:910px;width:163px;height:40px;border-radius:20px;background:#eafaea"></div>
<div class="a" style="left:1127px;top:922px;width:16px;height:16px;border-radius:8px;background:#5cbf60"></div>
<div class="t s24" style="left:1152px;top:919px;color:#5cbf60;-webkit-text-stroke:0.4px #5cbf60;letter-spacing:0.3px">Deployed</div>
<svg style="left:1614px;top:903px" width="46" height="46" viewBox="0 0 46 46"><rect x="0.75" y="0.75" width="44.5" height="44.5" rx="9" fill="#f4f5f9" stroke="#e8e9f1" stroke-width="1.5"/>
<rect x="13" y="5.5" width="10" height="36" rx="3" fill="#9ebdbb"/><rect x="14" y="6.5" width="4.5" height="9" rx="2" fill="#2c4b43"/>
<path d="M21 11 L31 13.5 C33 14 33.5 15 33.5 17 V39 C33.5 41 32.5 42 30.5 42 H23.5 C22 42 21 41 21 39.5 Z" fill="#17523f"/>
<path d="M23 15.5 L31.5 17 V38.5 C31.5 39.5 31 40 30 40 H24 C23.3 40 23 39.5 23 38.8 Z" fill="#3a9c86"/>
<ellipse cx="27.2" cy="32" rx="3.2" ry="5" fill="#72d6c6"/><ellipse cx="27.2" cy="24" rx="3" ry="3.5" fill="#1d5f4d"/></svg>
<div class="t s28 dk" style="left:1676.5px;top:913px;letter-spacing:-0.5px">iPhone 16</div>
<svg style="left:2190px;top:903px" width="46" height="46" viewBox="0 0 46 46"><defs><clipPath id="cc903"><rect x="1" y="1" width="44" height="44" rx="8.5"/></clipPath><linearGradient id="cg903" x1="0" y1="0" x2="1" y2="1"><stop offset="0" stop-color="#b9b89e"/><stop offset="0.45" stop-color="#8a7f58"/><stop offset="1" stop-color="#c29a72"/></linearGradient><filter id="bc903" x="-10%" y="-10%" width="120%" height="120%"><feGaussianBlur stdDeviation="1.1"/></filter></defs>
<rect x="0.75" y="0.75" width="44.5" height="44.5" rx="9" fill="#fff" stroke="#ebebf3" stroke-width="1.5"/>
<g clip-path="url(#cc903)"><rect x="0" y="0" width="46" height="46" fill="url(#cg903)"/><g filter="url(#bc903)"><rect x="38" y="0" width="8" height="32" fill="#3b5230"/><rect x="20" y="0" width="14" height="8" fill="#7f8d60"/><circle cx="7" cy="10" r="5" fill="#d2d0c4"/><circle cx="7" cy="38" r="7" fill="#cf9a62"/>
<path d="M15 44 C12 30 14 13 25 10 C34 9 38 18 38 30 C38 37 40 43 40 46 H15 Z" fill="#7e5646"/>
<ellipse cx="25" cy="20" rx="6.5" ry="9" fill="#dcae98"/><path d="M19 46 C21 38 31 36 44 41 V46 Z" fill="#caa08a"/></g></g></svg>
<div class="t s28 dk" style="left:2251.5px;top:913px;letter-spacing:0.25px">Charlie Thomas</div>
<div class="t s28 dk" style="left:2736px;top:913px;letter-spacing:-0.5px">Jun 12, 2025</div>
<div class="a" style="left:657px;top:974px;width:426px;height:2px;background:#ececf4"></div><div class="a" style="left:1087px;top:974px;width:506px;height:2px;background:#ececf4"></div><div class="a" style="left:1597px;top:974px;width:572px;height:2px;background:#ececf4"></div><div class="a" style="left:2173px;top:974px;width:542px;height:2px;background:#ececf4"></div><div class="a" style="left:2719px;top:974px;width:225px;height:2px;background:#ececf4"></div>
<div class="a" style="left:673px;top:996px;width:64px;height:64px;border-radius:15px;background:#dcf6d9"></div>
<svg style="left:693px;top:1010px" width="24" height="36" viewBox="0 0 24 36" fill="none" stroke="#5cbf60" stroke-width="2.8"><rect x="1.4" y="1.4" width="21.2" height="33.2" rx="2.6"/><path d="M1.5 6.3 H22.5 M6 11.5 H18 M1.5 29.2 H22.5"/></svg>
<div class="t s28 dk" style="left:752px;top:1015px;letter-spacing:0.25px">IP-002</div>
<div class="a" style="left:1111px;top:1012px;width:163px;height:40px;border-radius:20px;background:#eafaea"></div>
<div class="a" style="left:1127px;top:1024px;width:16px;height:16px;border-radius:8px;background:#5cbf60"></div>
<div class="t s24" style="left:1152px;top:1021px;color:#5cbf60;-webkit-text-stroke:0.4px #5cbf60;letter-spacing:0.3px">Deployed</div>
<svg style="left:1614px;top:1005px" width="46" height="46" viewBox="0 0 46 46"><rect x="0.75" y="0.75" width="44.5" height="44.5" rx="9" fill="#f4f5f9" stroke="#e8e9f1" stroke-width="1.5"/>
<rect x="13" y="5.5" width="10" height="36" rx="3" fill="#9ebdbb"/><rect x="14" y="6.5" width="4.5" height="9" rx="2" fill="#2c4b43"/>
<path d="M21 11 L31 13.5 C33 14 33.5 15 33.5 17 V39 C33.5 41 32.5 42 30.5 42 H23.5 C22 42 21 41 21 39.5 Z" fill="#17523f"/>
<path d="M23 15.5 L31.5 17 V38.5 C31.5 39.5 31 40 30 40 H24 C23.3 40 23 39.5 23 38.8 Z" fill="#3a9c86"/>
<ellipse cx="27.2" cy="32" rx="3.2" ry="5" fill="#72d6c6"/><ellipse cx="27.2" cy="24" rx="3" ry="3.5" fill="#1d5f4d"/></svg>
<div class="t s28 dk" style="left:1676.5px;top:1015px;letter-spacing:-0.5px">iPhone 16</div>
<svg style="left:2190px;top:1005px" width="46" height="46" viewBox="0 0 46 46"><defs><clipPath id="cn1005"><rect x="1" y="1" width="44" height="44" rx="8.5"/></clipPath><filter id="bl1005" x="-10%" y="-10%" width="120%" height="120%"><feGaussianBlur stdDeviation="0.6"/></filter></defs>
<rect x="0.75" y="0.75" width="44.5" height="44.5" rx="9" fill="#f1f1ed" stroke="#ebebf3" stroke-width="1.5"/>
<g clip-path="url(#cn1005)" filter="url(#bl1005)"><ellipse cx="22" cy="17" rx="9.5" ry="12.5" fill="#c89c7e"/><path d="M12 14 C11 5 16 1.5 22 1.5 C29 1.5 33 5 32 14 C30 9 27 8 22 8 C17 8 14 9 12 14 Z" fill="#231b19"/>
<path d="M14 21 C15.5 29 28.5 29 30 21 C29 27 26 30 22 30 C18 30 15 27 14 21 Z" fill="#3e2a24"/><ellipse cx="22" cy="23.2" rx="3.4" ry="1.9" fill="#d6a49a"/><path d="M16.5 16 H20 M24 16 H27.5" stroke="#8a6450" stroke-width="1.1"/>
<path d="M-1 46 V33 C3 29 10 27 16 26 C19 30.5 25 30.5 28 26 C34 27 41 29 47 33 V46 Z" fill="#5fd39c"/><path d="M10 42 C16 39 28 39 34 42" stroke="#a6f2cf" stroke-width="2" fill="none"/></g></svg>
<div class="t s28 dk" style="left:2251.5px;top:1015px;letter-spacing:0.3px">Noah Anderson</div>
<div class="t s28 dk" style="left:2736px;top:1015px;letter-spacing:-0.5px">Jun 12, 2025</div>
<div class="a" style="left:657px;top:1076px;width:426px;height:2px;background:#ececf4"></div><div class="a" style="left:1087px;top:1076px;width:506px;height:2px;background:#ececf4"></div><div class="a" style="left:1597px;top:1076px;width:572px;height:2px;background:#ececf4"></div><div class="a" style="left:2173px;top:1076px;width:542px;height:2px;background:#ececf4"></div><div class="a" style="left:2719px;top:1076px;width:225px;height:2px;background:#ececf4"></div>
</body></html>
